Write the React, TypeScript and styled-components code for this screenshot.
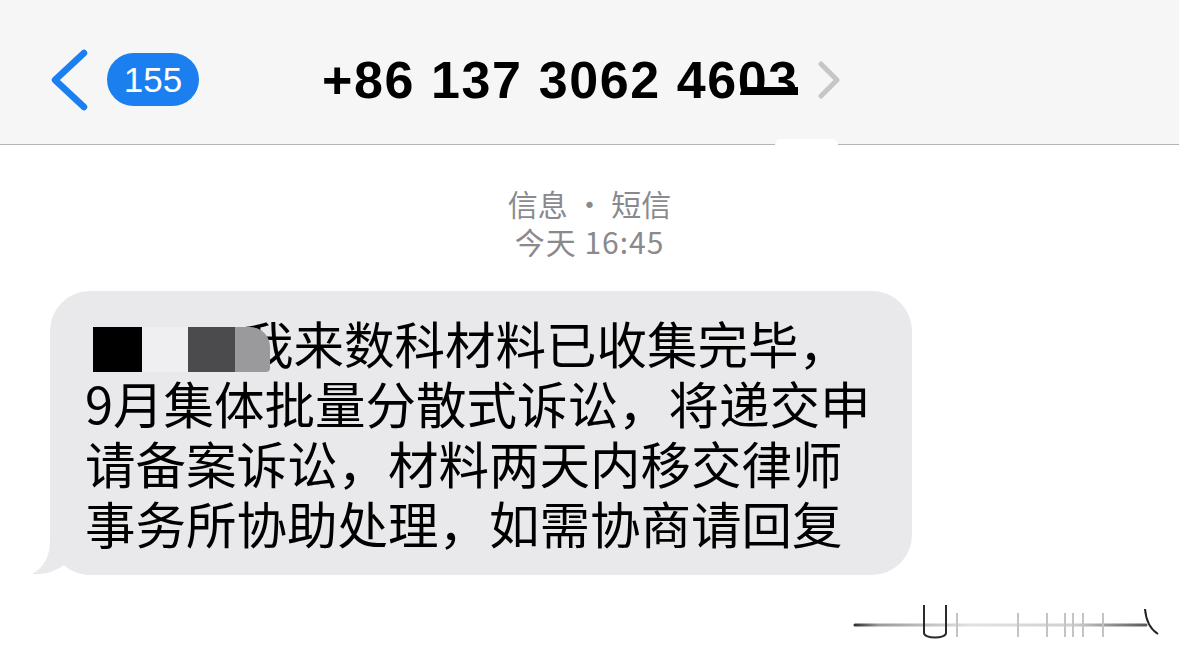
import React from 'react';
import styled, { createGlobalStyle } from 'styled-components';

const GlobalStyle = createGlobalStyle`
  html, body {
    margin: 0;
    padding: 0;
    background: #ffffff;
  }
  body {
    font-family: 'Noto Sans CJK SC', 'Noto Sans', sans-serif;
    width: 1179px;
    height: 660px;
    overflow: hidden;
  }
`;

const lines = [
  '9月集体批量分散式诉讼，将递交申',
  '请备案诉讼，材料两天内移交律师',
  '事务所协助处理，如需协商请回复',
];

function App() {
  return (
    <Page>
      <GlobalStyle />
      <Header>
        <BackGroup>
          <svg width="38" height="62" viewBox="0 0 38 62">
            <polyline
              points="34,4 5,31 34,58"
              fill="none"
              stroke="#1b7ff2"
              strokeWidth="6.5"
              strokeLinecap="round"
              strokeLinejoin="round"
            />
          </svg>
          <Badge>155</Badge>
        </BackGroup>
        <TitleGroup>
          <Title>
            +86 137 3062 46<Smudged>03</Smudged>
          </Title>
          <svg width="24" height="38" viewBox="0 0 24 38">
            <polyline
              points="4,3 20,19 4,35"
              fill="none"
              stroke="#c6c6c9"
              strokeWidth="5"
              strokeLinecap="round"
              strokeLinejoin="round"
            />
          </svg>
        </TitleGroup>
        <HeaderBlob />
      </Header>

      <Meta>
        <div>信息 • 短信</div>
        <MetaTime>今天 16:45</MetaTime>
      </Meta>

      <BubbleRow>
        <Bubble>
          <Line>
            <Redacted>
              <Mask $color="#000000" $width={49} />
              <Mask $color="#efeff1" $width={46} />
              <Mask $color="#4b4b4d" $width={47} />
              <Mask $color="#9a9a9c" $width={35} $tail />
            </Redacted>
            我来数科材料已收集完毕，
          </Line>
          {lines.map((l) => (
            <Line key={l}>{l}</Line>
          ))}
          <Tail width="70" height="45" viewBox="0 0 70 45">
            <path
              d="M18,0 L18,10 C18,28 11,38 0,44 C12,45 22,42 32,35 C40,42 50,45 64,45 L70,45 L70,0 Z"
              fill="#e9e9eb"
            />
          </Tail>
        </Bubble>
      </BubbleRow>

      <Footer>
        <svg width="320" height="50" viewBox="0 0 320 50">
          <defs>
            <linearGradient id="scan" gradientUnits="userSpaceOnUse" x1="5" x2="296" y1="0" y2="0">
              <stop offset="0" stopColor="#333" />
              <stop offset="0.08" stopColor="#9a9a9a" />
              <stop offset="0.4" stopColor="#e2e2e2" />
              <stop offset="0.75" stopColor="#cfcfcf" />
              <stop offset="1" stopColor="#5a5a5a" />
            </linearGradient>
          </defs>
          <line x1="5" y1="28" x2="296" y2="28" stroke="url(#scan)" strokeWidth="3" strokeLinecap="round" />
          {[107, 168, 197, 215, 223, 233, 253].map((x) => (
            <line key={x} x1={x} y1="16" x2={x} y2="40" stroke="#c4c4c4" strokeWidth="2" />
          ))}
          <path d="M74,8 L74,36 C74,42 96,42 96,36 L96,8" fill="none" stroke="#2a2a2a" strokeWidth="2" />
          <path d="M295,12 C296,24 300,32 308,37" fill="none" stroke="#222" strokeWidth="2" />
        </svg>
      </Footer>
    </Page>
  );
}

interface MaskProps {
  readonly $color: string;
  readonly $width: number;
  readonly $tail?: boolean;
}

const Page = styled.div`
  width: 1179px;
  height: 660px;
  display: flex;
  flex-direction: column;
  background: #ffffff;
`;

const Header = styled.div`
  position: relative;
  height: 145px;
  box-sizing: border-box;
  padding: 15px 0 0 50px;
  display: flex;
  align-items: center;
  background: #f6f6f6;
  border-bottom: 1px solid #b4b4b4;
`;

const BackGroup = styled.div`
  display: flex;
  align-items: center;
  gap: 19px;
`;

const Badge = styled.div`
  width: 92px;
  height: 53px;
  border-radius: 27px;
  background: #1c7ff0;
  color: #ffffff;
  font-family: 'Liberation Sans', Arial, sans-serif;
  font-size: 35px;
  line-height: 53px;
  text-align: center;
`;

const TitleGroup = styled.div`
  margin-left: 123px;
  display: flex;
  align-items: center;
  gap: 18px;
`;

const Title = styled.div`
  font-family: 'Liberation Sans', Arial, sans-serif;
  font-weight: 700;
  font-size: 52px;
  letter-spacing: 1.6px;
  color: #000000;
  white-space: nowrap;
`;

const Smudged = styled.span`
  position: relative;
  &::after {
    content: '';
    position: absolute;
    left: 2px;
    right: 1px;
    bottom: 0.12em;
    height: 15px;
    background: linear-gradient(#000 0 55%, #f6f6f6 55%);
    border-top-left-radius: 8px;
  }
`;

const HeaderBlob = styled.div`
  position: absolute;
  left: 775px;
  top: 139px;
  width: 63px;
  height: 12px;
  border-radius: 6px;
  background: #ffffff;
`;

const Meta = styled.div`
  margin-top: 39px;
  text-align: center;
  color: #8a8a8e;
  font-size: 30px;
  line-height: 38px;
`;

const MetaTime = styled.div`
  letter-spacing: 1px;
`;

const BubbleRow = styled.div`
  margin-top: 31px;
  padding-left: 50px;
  display: flex;
`;

const Bubble = styled.div`
  position: relative;
  width: 862px;
  box-sizing: border-box;
  padding: 21px 0 23px 35px;
  border-radius: 40px;
  background: #e9e9eb;
  color: #000000;
  font-size: 50.5px;
  line-height: 60px;
`;

const Line = styled.div`
  white-space: nowrap;
  position: relative;
  z-index: 1;
`;

const Redacted = styled.span`
  display: inline-flex;
  vertical-align: top;
  margin-top: 15px;
  margin-left: 8px;
  height: 45px;
`;

const Mask = styled.span<MaskProps>`
  display: block;
  width: ${({ $width }) => $width}px;
  height: 100%;
  background: ${({ $color }) => $color};
  position: relative;
  z-index: 2;
  margin-right: ${({ $tail }) => ($tail ? '-27px' : '0')};
  border-radius: ${({ $tail }) => ($tail ? '0 20px 4px 0' : '0')};
`;

const Tail = styled.svg`
  position: absolute;
  left: -18px;
  bottom: 0;
`;

const Footer = styled.div`
  margin-top: 22px;
  padding-right: 9px;
  display: flex;
  justify-content: flex-end;
`;

export default App;
